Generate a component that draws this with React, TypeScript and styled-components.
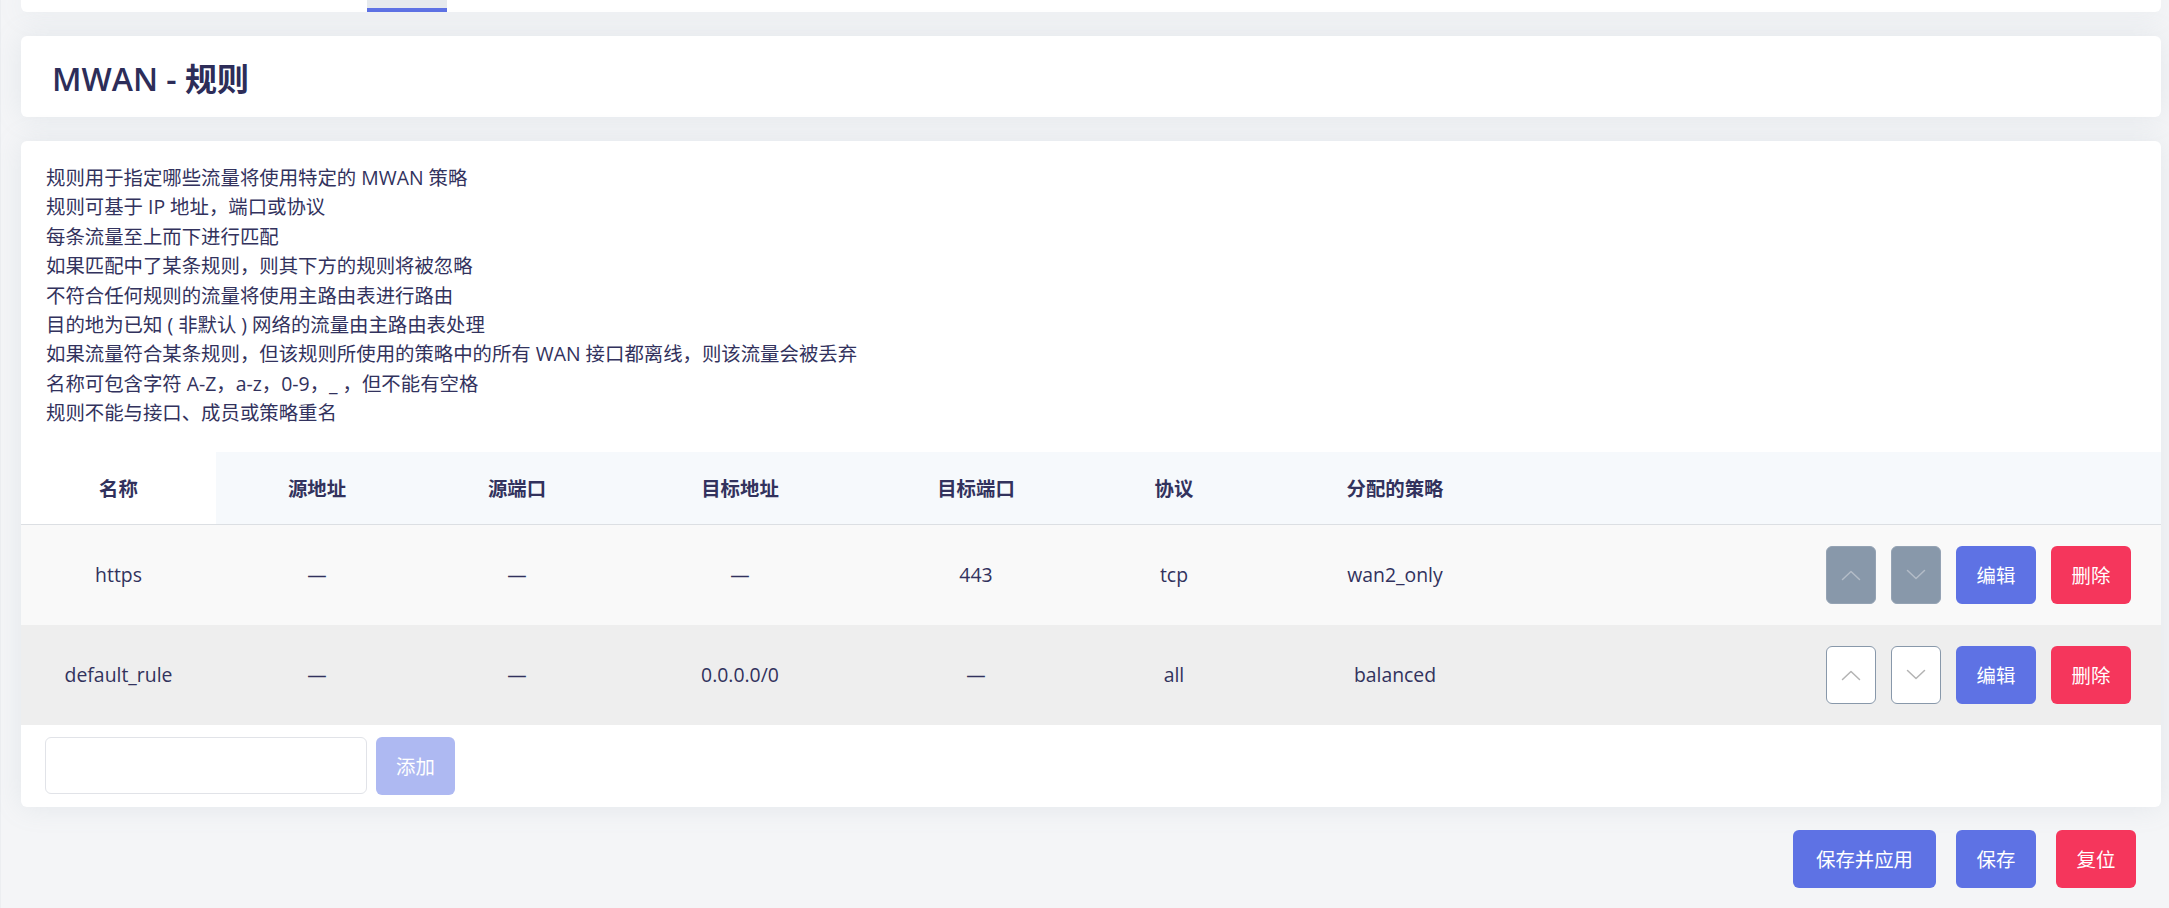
import React, { FC } from 'react';
import styled, { createGlobalStyle, css } from 'styled-components';

const colors = {
  page: '#f4f5f7',
  text: '#32325d',
  primary: '#5e72e4',
  primaryLight: '#aeb9f2',
  danger: '#f5365c',
  slate: '#8898aa',
  headBg: '#f6f9fc',
  rowOdd: '#f9f9f9',
  rowEven: '#eeeeee',
  line: '#dcdfe3',
};

const GlobalStyle = createGlobalStyle`
  html, body {
    margin: 0;
    padding: 0;
    background: ${colors.page};
  }
  body {
    font-family: "Open Sans", "Noto Sans CJK SC", sans-serif;
    color: ${colors.text};
    font-size: 19.4px;
  }
  * { box-sizing: border-box; }
`;

const Main = styled.main`
  display: flex;
  flex-direction: column;
  gap: 24px;
  padding: 0 8px 0 20px;
  min-height: 908px;
  border-left: 1px solid #eceef1;
`;

const Card = styled.section`
  background: #fff;
  border-radius: 6px;
  box-shadow: 0 0 28px rgba(136, 152, 170, 0.15);
`;

const TabBar = styled(Card)`
  display: flex;
  height: 12px;
  border-radius: 0 0 6px 6px;
  padding-left: 346px;
`;

const Tab = styled.div<{ $active?: boolean }>`
  width: 80px;
  background: #e6eaee;
  border-bottom: 4px solid ${(p) => (p.$active ? colors.primary : 'transparent')};
`;

const TitleCard = styled(Card)`
  height: 81px;
  display: flex;
  align-items: center;
  padding: 0 31px;
`;

const Title = styled.h2`
  margin: 0;
  font-size: 32px;
  font-weight: 600;
  color: #2d2d59;
`;

const Body = styled(Card)`
  padding: 22px 0 12px;
`;

const Notes = styled.div`
  padding: 0 25px;
  line-height: 29.4px;
  font-size: 19.4px;
  margin-bottom: 24px;
`;

const Table = styled.table`
  width: 100%;
  border-collapse: collapse;
  table-layout: fixed;
`;

const Th = styled.th<{ $w?: number; $plain?: boolean }>`
  height: 73px;
  width: ${(p) => (p.$w ? `${p.$w}px` : 'auto')};
  background: ${(p) => (p.$plain ? '#fff' : colors.headBg)};
  font-weight: 700;
  font-size: 19.4px;
  text-align: center;
  border-bottom: 1px solid ${colors.line};
  padding: 0;
`;

const Tr = styled.tr<{ $even?: boolean }>`
  background: ${(p) => (p.$even ? colors.rowEven : colors.rowOdd)};
  & + & td {
    border-top: 1px solid ${colors.line};
  }
`;

const Td = styled.td`
  height: 100px;
  text-align: center;
  padding: 0;
  font-size: 19.4px;
`;

const Actions = styled.div`
  display: flex;
  justify-content: flex-end;
  gap: 15px;
  padding-right: 30px;
`;

const buttonBase = css`
  height: 58px;
  border-radius: 6px;
  border: none;
  font-family: inherit;
  font-size: 19.4px;
  color: #fff;
  display: inline-flex;
  align-items: center;
  justify-content: center;
  padding: 0;
  cursor: pointer;
`;

const Button = styled.button<{ $tone: 'primary' | 'danger' | 'muted'; $w: number }>`
  ${buttonBase};
  width: ${(p) => p.$w}px;
  background: ${(p) =>
    p.$tone === 'primary' ? colors.primary : p.$tone === 'danger' ? colors.danger : colors.primaryLight};
`;

const MoveButton = styled.button<{ $disabled?: boolean }>`
  ${buttonBase};
  width: 50px;
  background: ${(p) => (p.$disabled ? colors.slate : '#fff')};
  border: 1px solid ${(p) => (p.$disabled ? '#95a3b4' : colors.slate)};
  color: ${(p) => (p.$disabled ? '#b3bcc7' : '#b3b3b3')};
`;

const AddRow = styled.div`
  display: flex;
  gap: 9px;
  padding: 12px 24px 0;
`;

const Input = styled.input`
  width: 322px;
  height: 57px;
  border: 1px solid #e1e3e8;
  border-radius: 6px;
  background: #fff;
  font-family: inherit;
  font-size: 19.4px;
  padding: 0 12px;
`;

const Footer = styled.div`
  display: flex;
  justify-content: flex-end;
  gap: 20px;
  padding-right: 25px;
  margin-top: -1px;
`;

const Chevron: FC<{ dir: 'up' | 'down' }> = ({ dir }) => (
  <svg width="20" height="12" viewBox="0 0 20 12" fill="none">
    <polyline
      points={dir === 'up' ? '1.5,10.5 10,2.5 18.5,10.5' : '1.5,1.5 10,9.5 18.5,1.5'}
      stroke="currentColor"
      strokeWidth="1.5"
      strokeLinecap="round"
      strokeLinejoin="round"
    />
  </svg>
);

type Rule = {
  name: string;
  srcIp: string;
  srcPort: string;
  destIp: string;
  destPort: string;
  proto: string;
  policy: string;
};

const rules: Rule[] = [
  { name: 'https', srcIp: '—', srcPort: '—', destIp: '—', destPort: '443', proto: 'tcp', policy: 'wan2_only' },
  { name: 'default_rule', srcIp: '—', srcPort: '—', destIp: '0.0.0.0/0', destPort: '—', proto: 'all', policy: 'balanced' },
];

const notes = [
  '规则用于指定哪些流量将使用特定的 MWAN 策略',
  '规则可基于 IP 地址，端口或协议',
  '每条流量至上而下进行匹配',
  '如果匹配中了某条规则，则其下方的规则将被忽略',
  '不符合任何规则的流量将使用主路由表进行路由',
  '目的地为已知 ( 非默认 ) 网络的流量由主路由表处理',
  '如果流量符合某条规则，但该规则所使用的策略中的所有 WAN 接口都离线，则该流量会被丢弃',
  '名称可包含字符 A-Z，a-z，0-9，_ ，但不能有空格',
  '规则不能与接口、成员或策略重名',
];

const App: FC = () => (
  <>
    <GlobalStyle />
    <Main>
      <TabBar>
        <Tab $active />
      </TabBar>
      <TitleCard>
        <Title>MWAN - 规则</Title>
      </TitleCard>
      <Body>
        <Notes>
          {notes.map((n) => (
            <div key={n}>{n}</div>
          ))}
        </Notes>
        <Table>
          <thead>
            <tr>
              <Th $w={195} $plain>名称</Th>
              <Th $w={202}>源地址</Th>
              <Th $w={198}>源端口</Th>
              <Th $w={248}>目标地址</Th>
              <Th $w={224}>目标端口</Th>
              <Th $w={172}>协议</Th>
              <Th $w={270}>分配的策略</Th>
              <Th />
            </tr>
          </thead>
          <tbody>
            {rules.map((r, i) => (
              <Tr key={r.name} $even={i % 2 === 1}>
                <Td>{r.name}</Td>
                <Td>{r.srcIp}</Td>
                <Td>{r.srcPort}</Td>
                <Td>{r.destIp}</Td>
                <Td>{r.destPort}</Td>
                <Td>{r.proto}</Td>
                <Td>{r.policy}</Td>
                <Td>
                  <Actions>
                    <MoveButton $disabled={i === 0} title="上移">
                      <Chevron dir="up" />
                    </MoveButton>
                    <MoveButton $disabled={i === 0} title="下移">
                      <Chevron dir="down" />
                    </MoveButton>
                    <Button $tone="primary" $w={80}>编辑</Button>
                    <Button $tone="danger" $w={80}>删除</Button>
                  </Actions>
                </Td>
              </Tr>
            ))}
          </tbody>
        </Table>
        <AddRow>
          <Input />
          <Button $tone="muted" $w={79}>添加</Button>
        </AddRow>
      </Body>
      <Footer>
        <Button $tone="primary" $w={143}>保存并应用</Button>
        <Button $tone="primary" $w={80}>保存</Button>
        <Button $tone="danger" $w={80}>复位</Button>
      </Footer>
    </Main>
  </>
);

export default App;
